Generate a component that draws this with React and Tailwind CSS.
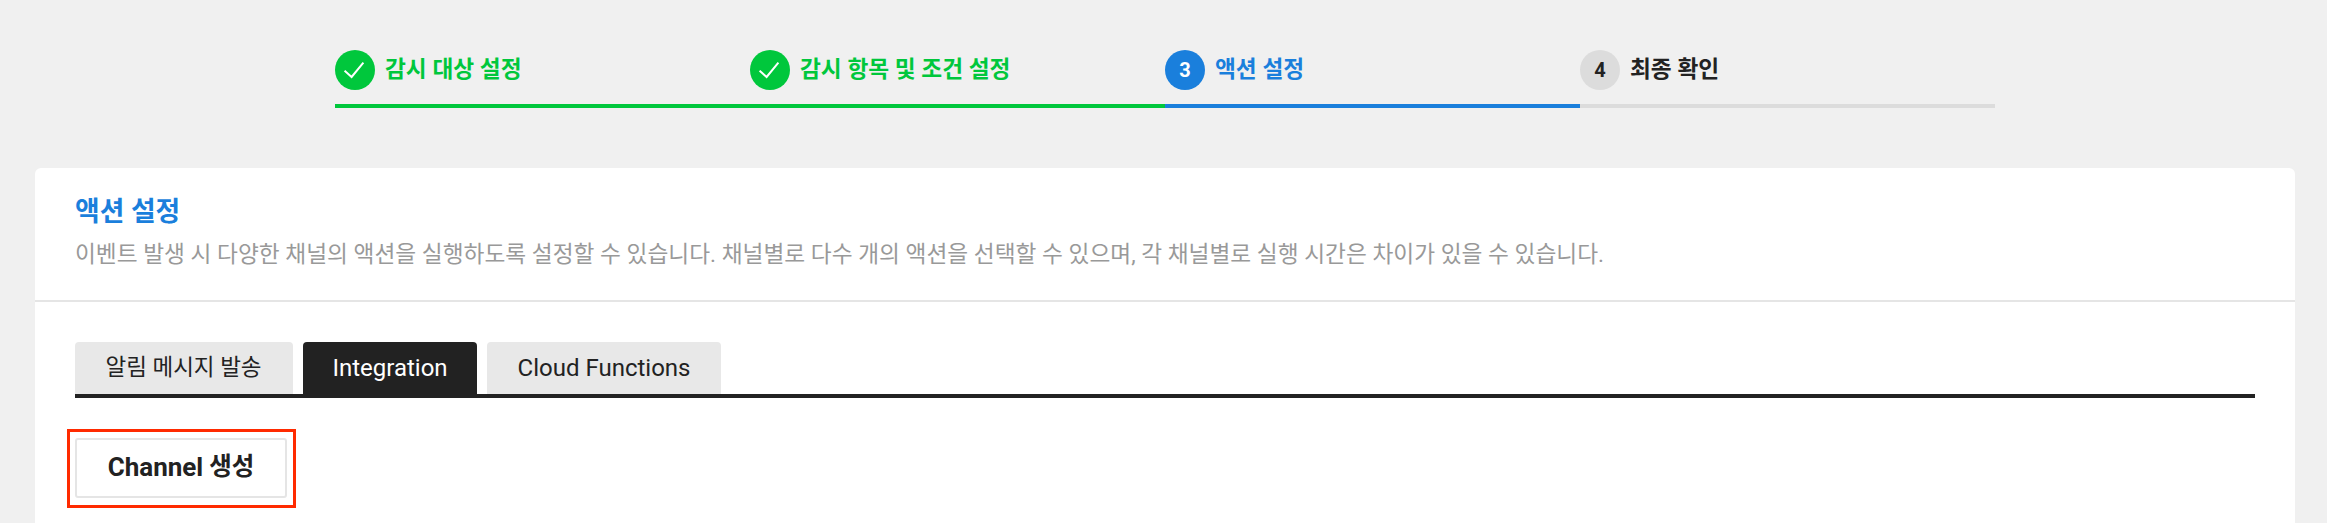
const FONT = "font-['Roboto','Noto_Sans_CJK_KR',sans-serif]";

function Check() {
  return (
    <svg width="22" height="18" viewBox="0 0 22 18" fill="none">
      <path d="M0.6 9.7L7.6 16L19.4 1.7" stroke="#fff" strokeWidth="2" />
    </svg>
  );
}

const steps = [
  { label: '감시 대상 설정', state: 'done' },
  { label: '감시 항목 및 조건 설정', state: 'done' },
  { label: '액션 설정', state: 'active', n: 3 },
  { label: '최종 확인', state: 'todo', n: 4 },
];

function Step({ step }) {
  const line = step.state === 'done' ? 'border-[#00c73c]' : step.state === 'active' ? 'border-[#1a7fdc]' : 'border-[#dcdcdc]';
  const circle = step.state === 'done' ? 'bg-[#00c73c] text-white' : step.state === 'active' ? 'bg-[#1a7fdc] text-white' : 'bg-[#dcdcdc] text-[#222]';
  const text = step.state === 'done' ? 'text-[#00c73c]' : step.state === 'active' ? 'text-[#1a7fdc]' : 'text-[#222]';
  return (
    <div className={`w-[415px] h-[58px] border-b-4 ${line} flex items-start gap-[10px]`}>
      <div className={`w-10 h-10 rounded-full flex items-center justify-center text-[20px] font-bold ${circle}`}>
        {step.state === 'done' ? <Check /> : step.n}
      </div>
      <div className={`text-[22.7px] leading-10 font-bold ${text}`}>{step.label}</div>
    </div>
  );
}

export default function App() {
  return (
    <div className={`${FONT} w-full h-[523px] bg-[#f0f0f0] overflow-hidden`}>
      <div className="pt-[50px] pl-[335px] flex">
        {steps.map((s) => <Step key={s.label} step={s} />)}
      </div>
      <div className="mt-[60px] ml-[35px] mr-[32px] bg-white rounded-t-[6px] h-[355px]">
        <div className="h-[134px] border-b-2 border-[#e5e5e5] px-10 pt-[26px]">
          <div className="text-[26.8px] leading-9 font-bold text-[#1a7fdc]">액션 설정</div>
          <div className="text-[22.7px] leading-8 mt-[9px] text-[#999]">이벤트 발생 시 다양한 채널의 액션을 실행하도록 설정할 수 있습니다. 채널별로 다수 개의 액션을 선택할 수 있으며, 각 채널별로 실행 시간은 차이가 있을 수 있습니다.</div>
        </div>
        <div className="px-10 pt-10">
          <div className="flex gap-[10px] h-14 border-b-4 border-[#222] text-[24px]">
            <div className="w-[218px] h-[52px] flex items-center justify-center bg-[#e8e8e8] text-[#222] rounded-t-[4px] text-[22.5px] pr-[1px]">알림 메시지 발송</div>
            <div className="w-[174px] h-[52px] flex items-center justify-center bg-[#222] text-white rounded-t-[4px]">Integration</div>
            <div className="w-[234px] h-[52px] flex items-center justify-center bg-[#e8e8e8] text-[#222] rounded-t-[4px]">Cloud Functions</div>
          </div>
          <div className="mt-[31px] -ml-2 w-[229px] h-[79px] border-[3px] border-[#ff2a00] pl-[5px] pt-[6px]">
            <div className="w-[212px] h-[60px] border-2 border-[#e5e5e5] rounded-[3px] flex items-center justify-center text-[26px] font-bold text-[#222] pb-[2px]">Channel <span className="text-[24.5px] ml-[6px]">생성</span></div>
          </div>
        </div>
      </div>
    </div>
  );
}
